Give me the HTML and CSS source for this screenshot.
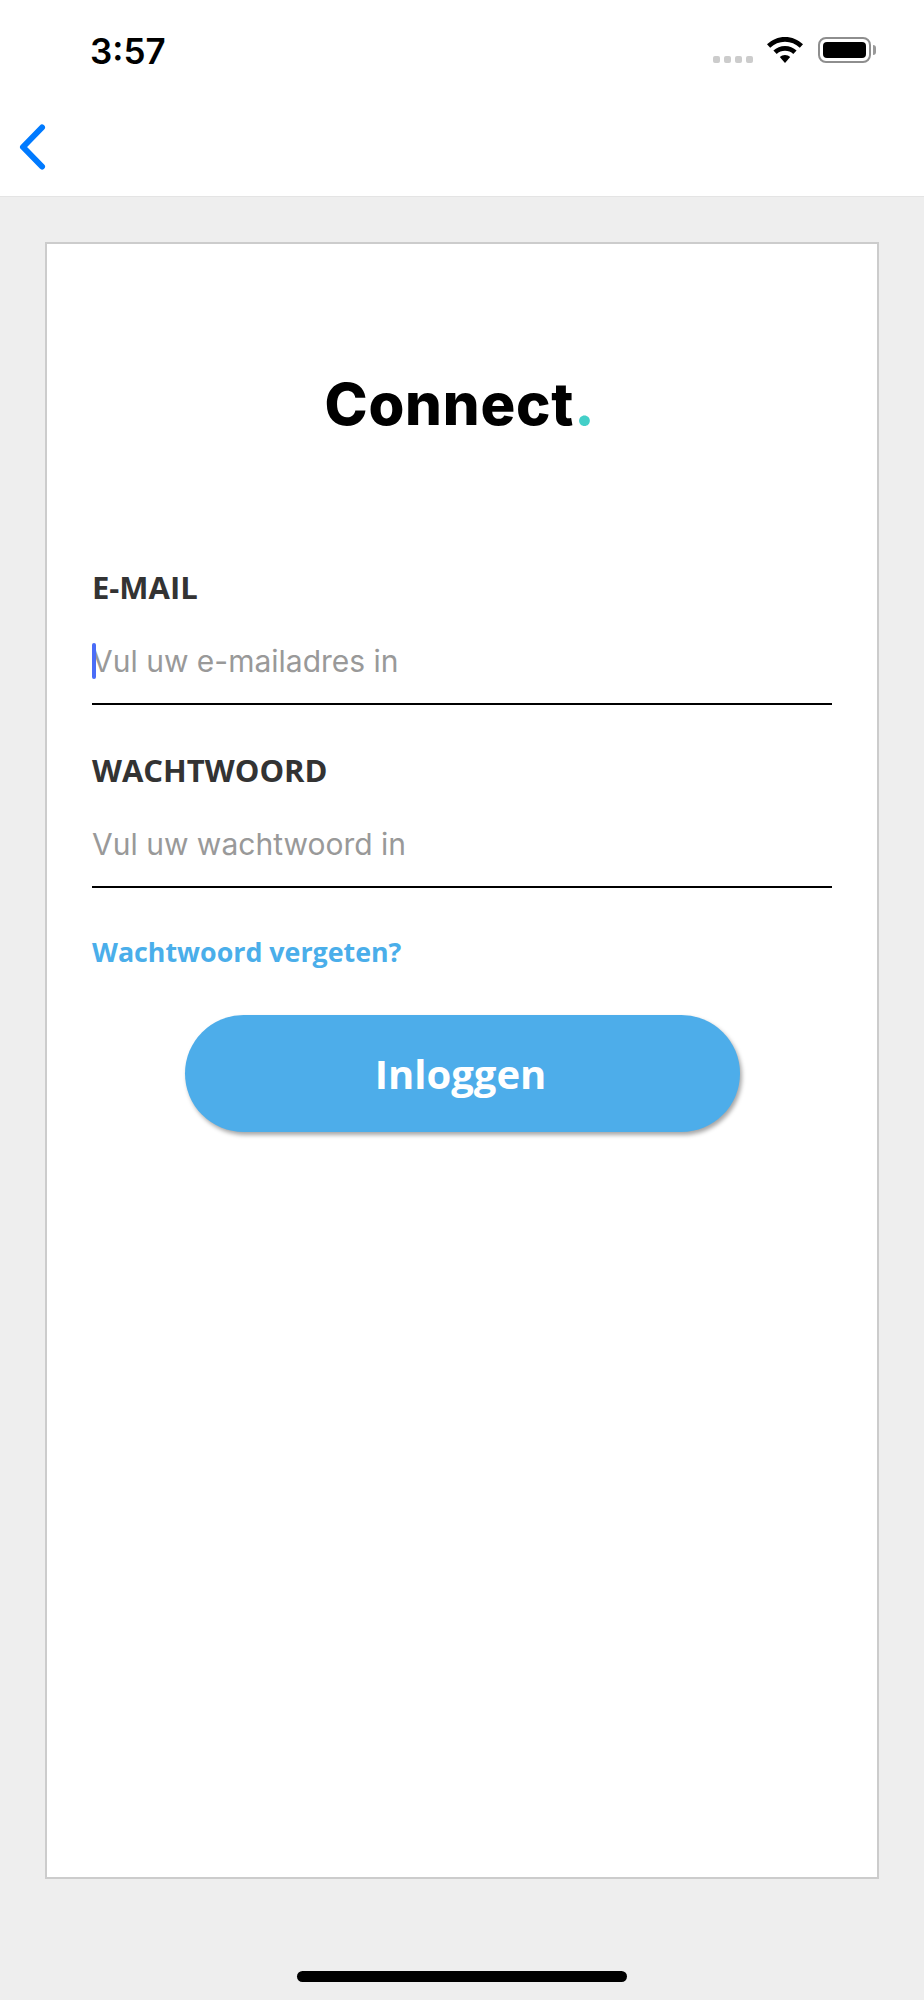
FILE: index.html
```html
<!DOCTYPE html>
<html lang="nl">
<head>
  <meta charset="UTF-8">
  <title>Connect - Inloggen</title>
  <link rel="stylesheet" href="styles.css">
</head>
<body>

<div class="statusbar">
  <span class="time">3:57</span>
  <div class="status-icons">
    <div class="signal"><i></i><i></i><i></i><i></i></div>
    <svg class="wifi" width="36" height="26" viewBox="0 0 36 26">
      <path d="M18 0C11 0 5 2.700 0 7.300L3.200 10.700C7.200 7 12.300 4.800 18 4.800S28.800 7 32.800 10.700L36 7.300C31 2.700 25 0 18 0Z"/>
      <path d="M18 9C13.500 9 9.500 10.700 6.400 13.600L9.700 17C11.900 15 14.800 13.800 18 13.800S24.100 15 26.300 17L29.600 13.600C26.500 10.700 22.500 9 18 9Z"/>
      <path d="M18 18C16 18 14.200 18.700 12.800 20L18 26L23.200 20C21.800 18.700 20 18 18 18Z"/>
    </svg>
    <div class="battery"><div class="battery-fill"></div></div>
  </div>
</div>

<div class="navbar">
  <svg class="back" width="30" height="48" viewBox="0 0 30 48">
    <path d="M25 4.500L6 24L25 43.500"/>
  </svg>
</div>

<div class="content">
  <div class="card">
    <div class="logo">Connect<span class="logo-dot">.</span></div>

    <div class="field field-first">
      <div class="field-label">E-MAIL</div>
      <div class="field-input">
        <span class="caret"></span>
        Vul uw e-mailadres in
      </div>
    </div>

    <div class="field">
      <div class="field-label">WACHTWOORD</div>
      <div class="field-input">Vul uw wachtwoord in</div>
    </div>

    <a class="forgot" href="#">Wachtwoord vergeten?</a>

    <button class="login">Inloggen</button>
  </div>
</div>

<div class="home-area">
  <div class="home-bar"></div>
</div>

</body>
</html>
```

FILE: styles.css
```css
body {
  margin: 0;
  padding: 0;
  height: 2000px;
  display: flex;
  flex-direction: column;
  background-color: #eeeeee;
  font-family: 'Open Sans', sans-serif;
  color: #333333;
}

.statusbar {
  height: 100px;
  box-sizing: border-box;
  padding: 31px 53px 0 90px;
  background-color: #fff;
  display: flex;
  justify-content: space-between;
  align-items: flex-start;
}

.time {
  font-family: Inter, sans-serif;
  font-size: 35px;
  font-weight: 600;
  line-height: 40px;
  color: #000;
}

.status-icons {
  display: flex;
  align-items: flex-end;
  margin-top: 6px;
}

.signal {
  display: flex;
  gap: 4px;
}

.signal i {
  width: 7px;
  height: 7px;
  border-radius: 2px;
  background-color: #cccccc;
}

.wifi {
  display: block;
  margin-left: 14px;
  fill: #000;
}

.battery {
  position: relative;
  width: 53px;
  height: 26px;
  box-sizing: border-box;
  margin-left: 15px;
  padding: 3px;
  border: 2px solid #8e8e8e;
  border-radius: 8px;
}

.battery::after {
  content: "";
  position: absolute;
  right: -7px;
  top: 6px;
  width: 3px;
  height: 10px;
  border-radius: 0 3px 3px 0;
  background-color: #999;
}

.battery-fill {
  height: 100%;
  border-radius: 4px;
  background-color: #000;
}

.navbar {
  height: 97px;
  box-sizing: border-box;
  padding: 23px 0 0 17px;
  background-color: #fff;
  border-bottom: 1px solid #e4e4e4;
}

.back {
  display: block;
  fill: none;
  stroke: #007aff;
  stroke-width: 6;
  stroke-linecap: round;
  stroke-linejoin: round;
}

.content {
  flex: 1;
  padding: 45px 45px 0 45px;
}

.card {
  height: 1637px;
  box-sizing: border-box;
  padding: 125px 45px 0 45px;
  background-color: #fff;
  border: 2px solid #cccccc;
  display: flex;
  flex-direction: column;
}

.logo {
  padding-right: 4px;
  font-family: Inter, sans-serif;
  font-size: 58px;
  font-weight: 800;
  letter-spacing: 0.8px;
  line-height: 70px;
  text-align: center;
  color: #000;
}

.logo-dot {
  color: #43cfc8;
}

.field {
  display: flex;
  flex-direction: column;
}

.field-first {
  margin-top: 83px;
}

.field-label {
  margin-top: 46px;
  font-size: 31px;
  font-weight: 700;
  line-height: 38px;
  color: #333;
}

.field-input {
  position: relative;
  height: 64px;
  padding-top: 33px;
  font-family: Inter, sans-serif;
  font-size: 30px;
  line-height: 44px;
  color: #999999;
  border-bottom: 2px solid #000;
}

.caret {
  position: absolute;
  left: 0;
  top: 37px;
  width: 4px;
  height: 36px;
  border-radius: 2px;
  background-color: #4a6cf7;
}

.forgot {
  margin-top: 46px;
  font-size: 26.800px;
  font-weight: 700;
  line-height: 36px;
  color: #4aaeea;
  text-decoration: none;
}

.login {
  align-self: center;
  width: 555px;
  height: 117px;
  margin-top: 45px;
  padding: 0 3px 0 0;
  border: none;
  border-radius: 59px;
  background-color: #4dadea;
  box-shadow: 2px 3px 4px rgba(0, 0, 0, 0.35);
  font-family: 'Open Sans', sans-serif;
  font-size: 40px;
  font-weight: 700;
  color: #fff;
}

.home-area {
  height: 121px;
  box-sizing: border-box;
  padding-top: 92px;
}

.home-bar {
  width: 330px;
  height: 11px;
  margin: 0 auto;
  border-radius: 6px;
  background-color: #000;
}
```
